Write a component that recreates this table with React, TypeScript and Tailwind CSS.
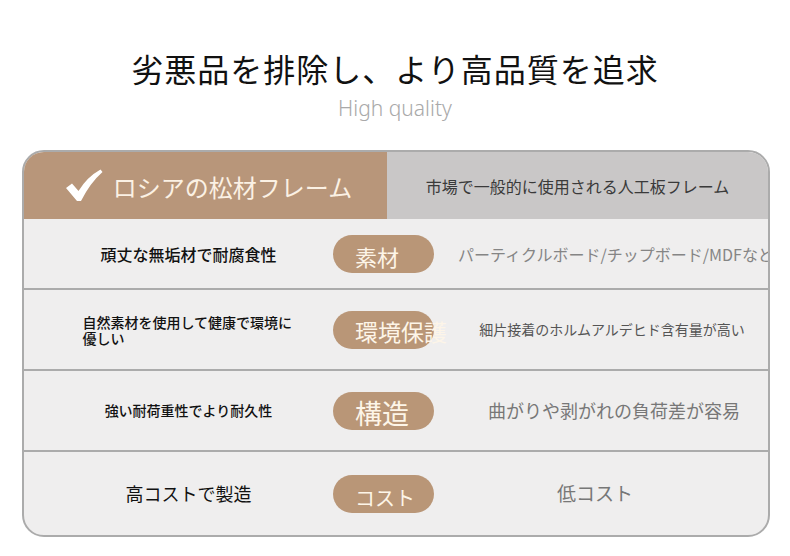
import React from 'react';

interface Row {
  left: string;
  leftClass: string;
  tag: string;
  tagClass: string;
  right: string;
  rightClass: string;
  rowClass: string;
}

const rows: Row[] = [
  {
    left: '頑丈な無垢材で耐腐食性',
    leftClass: 'text-[16px] font-medium',
    tag: '素材',
    tagClass: 'text-[22px] pt-[4px]',
    right: 'パーティクルボード/チップボード/MDFなど',
    rightClass: 'justify-start pl-[24px] text-[16px] text-[#858585]',
    rowClass: 'h-[71px] border-b-2',
  },
  {
    left: '自然素材を使用して健康で環境に優しい',
    leftClass: 'text-[14px] leading-[16px] font-medium w-[212px]',
    tag: '環境保護',
    tagClass: 'text-[23px] pt-[4px]',
    right: '細片接着のホルムアルデヒド含有量が高い',
    rightClass: 'justify-center pl-[22px] text-[14px] text-[#555555]',
    rowClass: 'h-[81px] border-b-2',
  },
  {
    left: '強い耐荷重性でより耐久性',
    leftClass: 'text-[14px] font-medium',
    tag: '構造',
    tagClass: 'text-[27px] pt-[3px]',
    right: '曲がりや剥がれの負荷差が容易',
    rightClass: 'justify-center pl-[26px] text-[18px] text-[#777777]',
    rowClass: 'h-[81px] border-b-2',
  },
  {
    left: '高コストで製造',
    leftClass: 'text-[18px]',
    tag: 'コスト',
    tagClass: 'text-[20px] pt-[8px]',
    right: '低コスト',
    rightClass: 'justify-center pr-[12px] text-[19px] text-[#777777]',
    rowClass: 'h-[83px]',
  },
];

function CheckMark() {
  return (
    <svg width="38" height="33" viewBox="0 0 38 33">
      <path
        d="M1 19 L7 14.5 L13.5 22 Q22 8 35.5 0.5 L37.5 3 Q25 14 16 32 L12 32 Z"
        fill="#ffffff"
      />
    </svg>
  );
}

export default function App() {
  return (
    <div className="w-[790px] h-[556px] bg-white font-['Noto_Sans_CJK_JP',sans-serif] overflow-hidden">
      <h1 className="mt-[48px] text-center text-[32px] tracking-[1px] leading-[40px] text-[#111111] font-normal">
        劣悪品を排除し、より高品質を追求
      </h1>
      <p className="mt-[8px] text-center font-['Noto_Sans',sans-serif] font-light text-[21px] leading-[24px] text-[#a9a9a9]">
        High quality
      </p>

      <div className="mt-[30px] ml-[22px] w-[748px] border-2 border-[#ababab] rounded-[22px] overflow-hidden bg-[#efeeee]">
        <div className="flex h-[67px]">
          <div className="w-[363px] bg-[#b8967a] flex items-center justify-center gap-[10px] pl-[6px]">
            <CheckMark />
            <span className="text-[24px] text-[#fbf1e4] leading-none pt-[2px]">ロシアの松材フレーム</span>
          </div>
          <div className="flex-1 bg-[#c9c7c7] flex items-center justify-center">
            <span className="text-[16px] text-[#3a3a3a]">市場で一般的に使用される人工板フレーム</span>
          </div>
        </div>

        {rows.map((r) => (
          <div key={r.tag} className={`flex items-center border-[#ababab] ${r.rowClass}`}>
            <div className="w-[309px] pl-[20px] flex justify-center">
              <p className={`text-[#111111] ${r.leftClass}`}>{r.left}</p>
            </div>
            <div className="w-[101px] h-[38px] rounded-full bg-[#b99677] flex items-center pl-[22px]">
              <span className={`whitespace-nowrap leading-none text-[#fdf5e8] ${r.tagClass}`}>{r.tag}</span>
            </div>
            <div className={`flex-1 flex whitespace-nowrap overflow-hidden ${r.rightClass}`}>
              <span>{r.right}</span>
            </div>
          </div>
        ))}
      </div>
    </div>
  );
}
